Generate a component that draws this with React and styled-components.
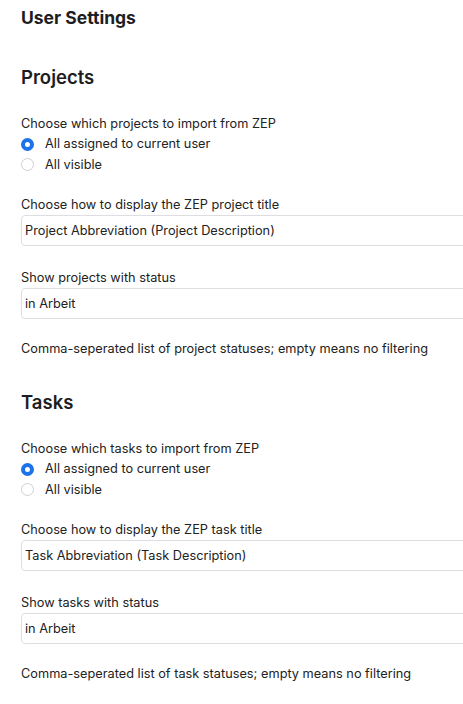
import React from "react";
import styled, { createGlobalStyle } from "styled-components";

const GlobalStyle = createGlobalStyle`
    body {
        margin: 0;
        background: #fff;
        font-family: "Inter", "Noto Sans", sans-serif;
        color: #222;
    }
`;

const sections = [
    {
        title: "Projects",
        importLabel: "Choose which projects to import from ZEP",
        titleLabel: "Choose how to display the ZEP project title",
        titleValue: "Project Abbreviation (Project Description)",
        statusLabel: "Show projects with status",
        help: "Comma-seperated list of project statuses; empty means no filtering",
    },
    {
        title: "Tasks",
        importLabel: "Choose which tasks to import from ZEP",
        titleLabel: "Choose how to display the ZEP task title",
        titleValue: "Task Abbreviation (Task Description)",
        statusLabel: "Show tasks with status",
        help: "Comma-seperated list of task statuses; empty means no filtering",
    },
];

const App = () => {
    return (
        <Page>
            <GlobalStyle />
            <Title>User Settings</Title>
            {sections.map((s) => (
                <Section key={s.title}>
                    <Heading>{s.title}</Heading>
                    <Field>
                        <Label>{s.importLabel}</Label>
                        <RadioRow>
                            <Radio checked />
                            All assigned to current user
                        </RadioRow>
                        <RadioRow>
                            <Radio />
                            All visible
                        </RadioRow>
                    </Field>
                    <Field>
                        <Label>{s.titleLabel}</Label>
                        <Input>{s.titleValue}</Input>
                    </Field>
                    <Field $gap={22}>
                        <Label>{s.statusLabel}</Label>
                        <Input>in Arbeit</Input>
                    </Field>
                    <Help>{s.help}</Help>
                </Section>
            ))}
        </Page>
    );
};

export default App;

const Page = styled.div`
    box-sizing: border-box;
    width: 100%;
    overflow: hidden;
    padding: 6px 0 0 21px;
`;

const Title = styled.h1`
    margin: 0;
    font-size: 17.5px;
    line-height: 24px;
    font-weight: 700;
    color: #1d1d1f;
`;

const Section = styled.section`
    display: flex;
    flex-direction: column;
    margin-top: 33px;

    & + & {
        margin-top: 29px;
    }
`;

const Heading = styled.h2`
    margin: 0 0 23px;
    font-size: 18.5px;
    line-height: 28px;
    font-weight: 600;
    color: #1d1d1f;
`;

const Field = styled.div`
    display: flex;
    flex-direction: column;
    margin-top: ${(p) => (p.$gap ? p.$gap - 20 : 0)}px;
    margin-bottom: 20px;
`;

const Label = styled.div`
    font-size: 12.75px;
    line-height: 20px;
`;

const RadioRow = styled.label`
    display: flex;
    align-items: center;
    gap: 11px;
    font-size: 12.75px;
    line-height: 20px;
    height: 20.5px;
`;

const Radio = styled.span`
    width: 13px;
    height: 13px;
    box-sizing: border-box;
    border-radius: 50%;
    border: ${(p) => (p.checked ? "4px solid #1a73e8" : "1px solid #cfcfd4")};
    background: #fff;
    flex-shrink: 0;
`;

const Input = styled.div`
    box-sizing: border-box;
    width: 480px;
    height: 31px;
    padding: 0 3px;
    display: flex;
    align-items: center;
    border: 1px solid #dedee2;
    border-radius: 4px;
    font-size: 12.75px;
    background: #fff;
`;

const Help = styled.div`
    font-size: 12.75px;
    line-height: 20px;
`;
